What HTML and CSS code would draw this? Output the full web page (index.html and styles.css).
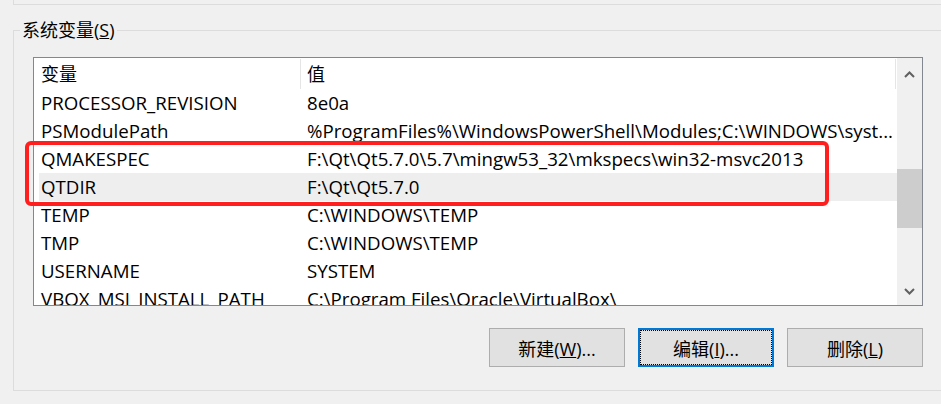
FILE: index.html
```html
<!DOCTYPE html>
<html lang="zh-CN">
<head>
<meta charset="utf-8">
<title>系统变量</title>
<link rel="stylesheet" href="styles.css">
</head>
<body>
<div class="prev-group"></div>
<fieldset class="group">
  <legend>系统变量(<u>S</u>)</legend>
  <div class="content">
    <div class="listview">
      <div class="list-main">
        <div class="header">
          <div class="h h-name">变量</div>
          <div class="h h-value">值</div>
        </div>
        <div class="rows">
          <div class="row"><span class="name">PROCESSOR_REVISION</span><span class="value">8e0a</span></div>
          <div class="row"><span class="name">PSModulePath</span><span class="value">%ProgramFiles%\WindowsPowerShell\Modules;C:\WINDOWS\syst...</span></div>
          <div class="row"><span class="name">QMAKESPEC</span><span class="value">F:\Qt\Qt5.7.0\5.7\mingw53_32\mkspecs\win32-msvc2013</span></div>
          <div class="row hot"><span class="name">QTDIR</span><span class="value">F:\Qt\Qt5.7.0</span></div>
          <div class="row"><span class="name">TEMP</span><span class="value">C:\WINDOWS\TEMP</span></div>
          <div class="row"><span class="name">TMP</span><span class="value">C:\WINDOWS\TEMP</span></div>
          <div class="row"><span class="name">USERNAME</span><span class="value">SYSTEM</span></div>
          <div class="row"><span class="name">VBOX_MSI_INSTALL_PATH</span><span class="value">C:\Program Files\Oracle\VirtualBox\</span></div>
        </div>
      </div>
      <div class="scrollbar">
        <div class="sb-btn sb-up">
          <svg width="11" height="7" viewBox="0 0 11 7"><path d="M1 6 L5.5 1.5 L10 6" fill="none" stroke="#606060" stroke-width="2"/></svg>
        </div>
        <div class="sb-track"><div class="sb-thumb"></div></div>
        <div class="sb-btn sb-down">
          <svg width="11" height="7" viewBox="0 0 11 7"><path d="M1 1 L5.5 5.5 L10 1" fill="none" stroke="#606060" stroke-width="2"/></svg>
        </div>
      </div>
    </div>
    <div class="buttons">
      <button class="btn">新建(<u>W</u>)...</button>
      <button class="btn focused">编辑(<u>I</u>)...</button>
      <button class="btn">删除(<u>L</u>)</button>
    </div>
  </div>
</fieldset>
<div class="mark"></div>
</body>
</html>
```
FILE: styles.css
```css
* { box-sizing: border-box; }
html, body { margin: 0; padding: 0; }
body {
  position: relative;
  width: 941px;
  height: 404px;
  overflow: hidden;
  background: #f0f0f0;
  color: #000;
  font-family: "Open Sans", "Noto Sans CJK SC", sans-serif;
  font-size: 18px;
}
.prev-group {
  margin-left: 13px;
  width: 1000px;
  height: 5px;
  border-left: 1px solid #dcdcdc;
  border-bottom: 1px solid #dcdcdc;
}
.group {
  margin: 15px 0 0 13px;
  padding: 0 0 23px 0;
  width: 1000px;
  min-width: 0;
  border: 1px solid #dcdcdc;
}
.group legend {
  margin-left: 6px;
  padding: 0 2px;
  height: 21px;
  line-height: 21px;
  font-size: 18px;
}
.content {
  margin-left: 19px;
  width: 890px;
}
.listview {
  margin-top: 16px;
  height: 249px;
  border: 1px solid #828790;
  background: #fff;
  display: flex;
}
.list-main {
  width: 863px;
  overflow: hidden;
}
.header {
  display: flex;
  height: 31px;
}
.h {
  margin-top: 1px;
  height: 30px;
  line-height: 30px;
  border-right: 1px solid #e5e5e5;
}
.h-name { width: 267px; padding-left: 7px; }
.h-value { width: 595px; padding-left: 6px; }
.rows { overflow: hidden; }
.row {
  display: grid;
  grid-template-columns: 262px 1fr;
  margin-left: 5px;
  height: 28px;
  line-height: 28px;
  font-size: 18.7px;
  white-space: nowrap;
}
.row.hot { background: #eeeeee; }
.name { padding-left: 2px; overflow: hidden; }
.value { padding-left: 6px; overflow: hidden; }
.scrollbar {
  width: 25px;
  background: #f0f0f0;
  display: flex;
  flex-direction: column;
}
.sb-btn {
  display: flex;
  align-items: center;
  justify-content: center;
}
.sb-btn svg { display: block; }
.sb-up { height: 32px; }
.sb-down { height: 27px; }
.sb-track { flex: 1; }
.sb-thumb {
  margin-top: 79px;
  height: 59px;
  background: #cdcdcd;
}
.buttons {
  display: flex;
  justify-content: flex-end;
  gap: 13px;
  margin-top: 22px;
}
.btn {
  width: 136px;
  height: 39px;
  padding: 0;
  background: #e1e1e1;
  border: 1px solid #adadad;
  color: #000;
  font: inherit;
  font-size: 18px;
}
.btn.focused {
  border: 2px solid #0078d7;
  outline: 1px dotted #000;
  outline-offset: -3px;
}
.mark {
  position: absolute;
  left: 25px;
  top: 141px;
  width: 804px;
  height: 65px;
  border: 4px solid #ff1f1f;
  border-radius: 6px;
}
```
